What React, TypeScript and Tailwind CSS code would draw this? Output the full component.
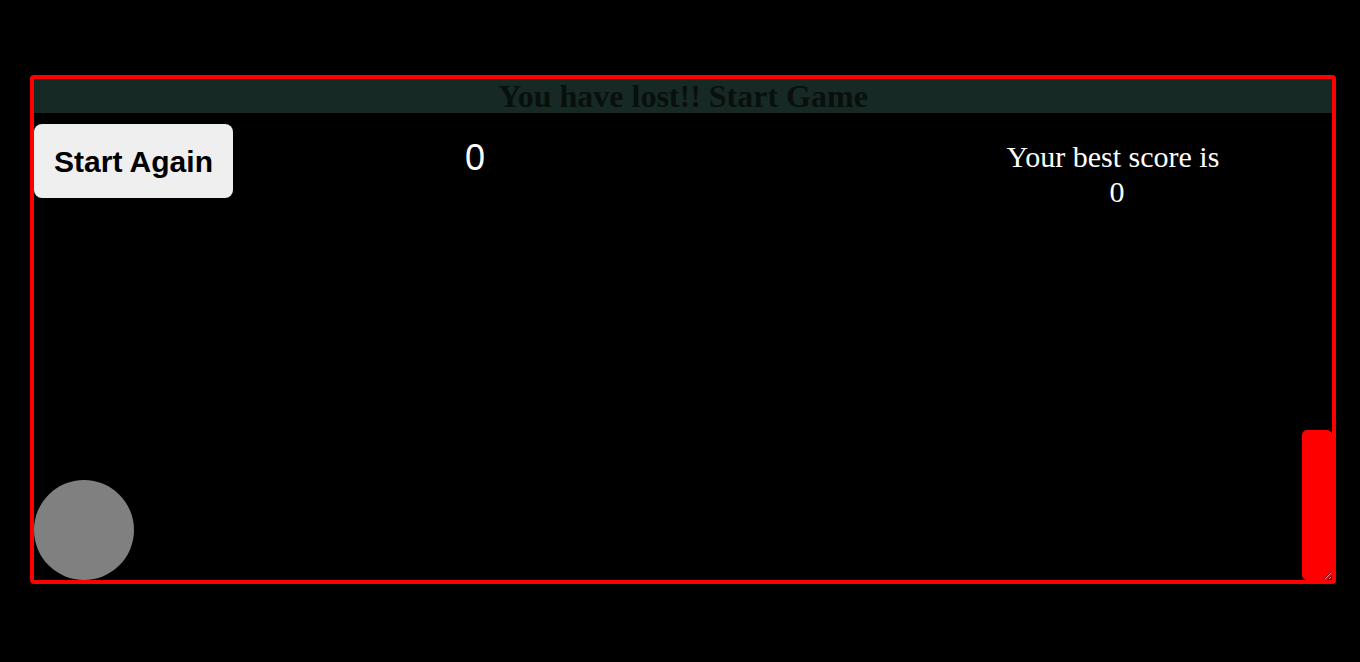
export default function App() {
  return (
    <div className="min-h-screen w-full bg-black pt-[75px] pl-[30px]">
      <div className="relative resize overflow-hidden w-[1306px] h-[509px] border-4 border-[#ff0000] rounded-[4px] bg-black">
        {/* banner */}
        <div className="h-[34px] bg-[#172924] text-center font-['Liberation_Serif',serif] font-bold text-[32px] leading-[34px] text-[#08100d]">
          You have lost!! Start Game
        </div>

        {/* top row */}
        <div className="flex items-start mt-[11px]">
          <button className="w-[199px] h-[74px] rounded-[8px] bg-[#efefef] text-black font-['Liberation_Sans',Arial,sans-serif] font-bold text-[30px]">
            Start Again
          </button>
          <div className="w-[484px] mt-[13px] text-center text-white font-['Liberation_Sans',Arial,sans-serif] text-[36px] leading-[41px]">
            0
          </div>
          <div className="ml-auto mr-[9px] w-[420px] mt-[15px] text-center text-white font-['Liberation_Serif',serif] text-[30px] leading-[35px]">
            <div>Your best score is</div>
            <div className="pl-[8px]">0</div>
          </div>
        </div>

        {/* ball */}
        <div className="absolute left-0 bottom-0 w-[100px] h-[100px] rounded-full bg-[#808080]" />
        {/* paddle */}
        <div className="absolute right-0 bottom-0 w-[30px] h-[150px] rounded-[5px] bg-[#ff0000]" />
      </div>
    </div>
  );
}
